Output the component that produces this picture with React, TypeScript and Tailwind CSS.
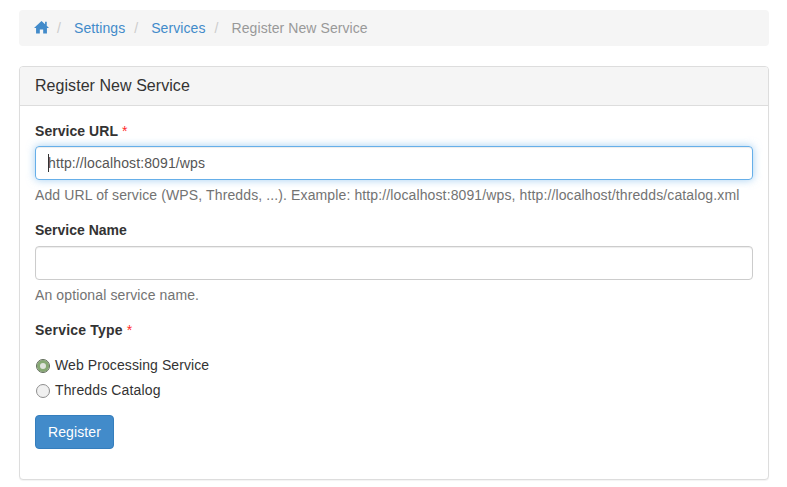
import { type ReactNode } from 'react'

function Sep() {
  return <span className="ml-[9px] mr-[13px] text-[#ccc]">/</span>
}

function Field({ label, required, help, gap, children }: { label: string; required?: boolean; help?: string; gap?: boolean; children?: ReactNode }) {
  return (
    <div className="mb-[15px]">
      <div className={gap ? 'mb-[6px] font-bold' : 'mb-[5px] font-bold tracking-[0.05px]'}>
        {label}
        {required && <span className="text-[#ff2a2a] font-normal"> *</span>}
      </div>
      {children}
      {help && <p className="mt-[5px] text-[#737373] tracking-[0.12px]">{help}</p>}
    </div>
  )
}

function Radio({ label, checked }: { label: string; checked?: boolean }) {
  return (
    <label className="flex items-center h-5 mb-[5px]">
      <input
        type="radio"
        name="service_type"
        defaultChecked={checked}
        className="appearance-none w-[14px] h-[14px] mt-[2px] ml-[1px] mr-[5px] rounded-full border border-[#8f8f8f] bg-[#f0f0f0] checked:border-[#5f6b58] checked:bg-[#dfe3dc] checked:shadow-[inset_0_0_0_3px_#86a873]"
      />
      <span className={checked ? 'tracking-[0.09px]' : 'tracking-[0.14px]'}>{label}</span>
    </label>
  )
}

export default function App() {
  return (
    <div className="pl-[19px] pr-[18px] pt-[10px] pb-[7px] bg-white text-[14px] leading-5 text-[#333] font-['Liberation_Sans',Arial,sans-serif]">
      <div className="flex items-center h-9 mb-5 pl-[15px] rounded bg-[#f5f5f5] tracking-[0.08px]">
        <svg viewBox="0 0 16 14" className="w-[15px] h-[14px] -mt-[2px] -mr-px fill-[#428bca]">
          <path d="M8 0.5 L11.8 4 V1.5 H13.6 V5.7 L16 8 H13.8 V14 H9.8 V9.6 H6.2 V14 H2.2 V8 H0 Z" />
        </svg>
        <Sep />
        <a className="text-[#428bca]">Settings</a>
        <Sep />
        <a className="text-[#428bca]">Services</a>
        <Sep />
        <span className="text-[#999]">Register New Service</span>
      </div>

      <div className="w-[750px] rounded border border-[#ddd] bg-white shadow-[0_1px_1px_rgba(0,0,0,0.05)]">
        <div className="h-[39px] flex items-center px-[15px] bg-[#f5f5f5] border-b border-[#ddd] rounded-t-[3px] text-[16px] tracking-[0.05px]">
          Register New Service
        </div>
        <form className="px-[15px] pt-[15px] pb-[30px]">
          <Field
            label="Service URL"
            required
            help="Add URL of service (WPS, Thredds, ...). Example: http://localhost:8091/wps, http://localhost/thredds/catalog.xml"
          >
            <div className="relative">
              <input
                readOnly
                value="http://localhost:8091/wps"
                className="block w-full h-[34px] px-3 rounded border border-[#66afe9] outline-none text-[#555] tracking-[0.12px] shadow-[inset_0_1px_1px_rgba(0,0,0,0.075),0_0_8px_rgba(102,175,233,0.6)]"
              />
              <span className="absolute left-[13px] top-[8px] w-px h-[18px] bg-[#333]" />
            </div>
          </Field>
          <Field label="Service Name" gap help="An optional service name.">
            <input className="block w-full h-[34px] px-3 rounded border border-[#ccc] outline-none text-[#555] shadow-[inset_0_1px_1px_rgba(0,0,0,0.075)]" />
          </Field>
          <div className="mb-[15px]">
            <div className="mb-[15px] font-bold tracking-[0.2px]">
              Service Type<span className="text-[#ff2a2a] font-normal"> *</span>
            </div>
            <Radio label="Web Processing Service" checked />
            <Radio label="Thredds Catalog" />
          </div>
          <button type="button" className="block h-[34px] px-3 rounded bg-[#428bca] border border-[#357ebd] text-white tracking-[0.1px]">
            Register
          </button>
        </form>
      </div>
    </div>
  )
}
